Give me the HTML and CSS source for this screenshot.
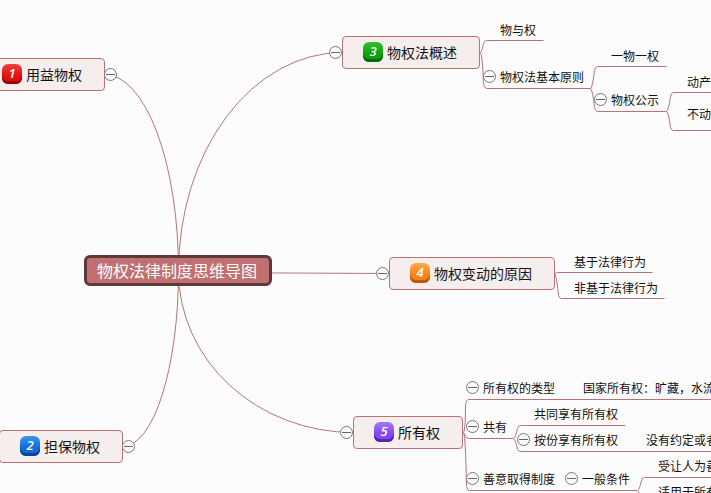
FILE: index.html
```
<!DOCTYPE html>
<html lang="zh-CN">
  <head>
    <meta charset="UTF-8" />
    <meta name="viewport" content="width=device-width, initial-scale=1.0" />
    <title>物权法律制度思维导图</title>
    <link rel="stylesheet" href="styles.css">
  </head>
  <body>
    <main class="map">
      <svg class="lines" aria-hidden="true">
        <g transform="translate(.5 .5)">
          <!-- root to main topics -->
          <path d="M178 271A74 196 0 0 0 104 74" />
          <path d="M178 271A164 219 0 0 1 342 52" />
          <path d="M178 271A56 175 0 0 1 122 446" />
          <path d="M178 271A175 161 0 0 0 353 432" />
          <path d="M178 272L389 273" />
          <!-- 3 -->
          <path d="M480 52Q482 50 483 43Q484 40 486 40H543" />
          <path d="M480 52Q482 55 483 83Q484 88 486 88H590" />
          <path d="M590 88Q592 87 594 70Q595 66 597 66H666" />
          <path d="M590 88Q592 89 594 107Q595 111 597 111H666" />
          <path d="M666 111Q668 110 670 96Q671 92 673 92H2000" />
          <path d="M666 111Q668 112 670 127Q671 130 673 130H2000" />
          <!-- 4 -->
          <path d="M554 273L557 272H652" />
          <path d="M554 273Q556 274 558 295Q559 298 561 298H664" />
          <!-- 5 -->
          <path d="M463 432Q465 430 465 404Q466 399 468 399H2000" />
          <path d="M463 432L466 437L468 438H513" />
          <path d="M463 432Q465 434 466 486Q467 490 469 490H637" />
          <path d="M513 438Q515 437 517 428Q518 425 520 425H625" />
          <path d="M513 438Q515 439 517 449Q518 451 520 451H2000" />
          <path d="M637 490Q639 489 641 480Q642 477 644 477H2000" />
          <path d="M637 490Q639 491 641 502Q642 503 644 503H2000" />
        </g>
      </svg>

      <h1 class="root">物权法律制度思维导图</h1>

      <div class="topic t1"><span class="badge red">1</span>用益物权</div>
      <div class="topic t2"><span class="badge blue">2</span>担保物权</div>
      <div class="topic t3"><span class="badge green">3</span>物权法概述</div>
      <div class="topic t4"><span class="badge orange">4</span>物权变动的原因</div>
      <div class="topic t5"><span class="badge purple">5</span>所有权</div>
      <button class="toggle b1" aria-label="收起 用益物权"></button>
      <button class="toggle b2" aria-label="收起 担保物权"></button>
      <button class="toggle b3" aria-label="收起 物权法概述"></button>
      <button class="toggle b4" aria-label="收起 物权变动的原因"></button>
      <button class="toggle b5" aria-label="收起 所有权"></button>

      <div class="sub s31">物与权</div>
      <div class="sub s32"><button class="toggle" aria-label="收起 物权法基本原则"></button>物权法基本原则</div>
      <div class="sub s321">一物一权</div>
      <div class="sub s322"><button class="toggle" aria-label="收起 物权公示"></button>物权公示</div>
      <div class="sub s3221">动产</div>
      <div class="sub s3222">不动产</div>

      <div class="sub s41">基于法律行为</div>
      <div class="sub s42">非基于法律行为</div>

      <div class="sub s51"><button class="toggle" aria-label="收起 所有权的类型"></button>所有权的类型</div>
      <div class="sub s511">国家所有权：旷藏，水流</div>
      <div class="sub s52"><button class="toggle" aria-label="收起 共有"></button>共有</div>
      <div class="sub s521">共同享有所有权</div>
      <div class="sub s522"><button class="toggle" aria-label="收起 按份享有所有权"></button>按份享有所有权</div>
      <div class="sub s5221">没有约定或者</div>
      <div class="sub s53"><button class="toggle" aria-label="收起 善意取得制度"></button>善意取得制度</div>
      <div class="sub s531"><button class="toggle" aria-label="收起 一般条件"></button>一般条件</div>
      <div class="sub s5311">受让人为善意</div>
      <div class="sub s5312">适用于所有权</div>
    </main>
  </body>
</html>
```
FILE: styles.css
```
* {
  box-sizing: border-box;
  margin: 0;
}
body {
  background-color: #fcfcfc;
  color: #111;
  font-family: "Noto Sans CJK SC", sans-serif;
}
.map {
  position: relative;
  height: 100vh;
  overflow: hidden;
}
.lines {
  position: absolute;
  left: 0;
  top: 0;
  width: 100%;
  height: 100%;
}
.lines path {
  fill: none;
  stroke: #b87474;
  stroke-width: 1;
}

.root {
  position: absolute;
  left: 84px;
  top: 255px;
  padding: 0 12px 0 10px;
  border: 3px solid #5e3939;
  border-radius: 6px;
  background-color: #c07070;
  color: #fff;
  font-size: 16px;
  font-weight: 400;
  line-height: 25px;
  white-space: nowrap;
}

.topic {
  position: absolute;
  display: flex;
  align-items: center;
  gap: 4px;
  height: 33px;
  padding: 0 22px 1px 20px;
  border: 1px solid #b87474;
  border-radius: 4px;
  background-color: #f6eded;
  font-size: 14px;
  line-height: 20px;
  white-space: nowrap;
}
.t1 { left: -19px; top: 58px; }
.t2 { left: -1px; top: 430px; }
.t3 { left: 342px; top: 36px; }
.t4 { left: 389px; top: 257px; }
.t5 { left: 353px; top: 416px; }

.badge {
  width: 20px;
  height: 20px;
  border-radius: 6px;
  color: #fff;
  font: italic 600 13px/19px "Open Sans", sans-serif;
  text-align: center;
}
.red {
  background: linear-gradient(#f4403c, #e01010 60%);
  box-shadow: inset 0 -3px #a00404;
}
.blue {
  background: linear-gradient(#3d94f0, #0f6ad8 60%);
  box-shadow: inset 0 -3px #084494;
}
.green {
  background: linear-gradient(#35c02c, #0fa010 60%);
  box-shadow: inset 0 -3px #066806;
}
.orange {
  background: linear-gradient(#ffa84c, #f28418 60%);
  box-shadow: inset 0 -3px #b85a0c;
}
.purple {
  background: linear-gradient(#a678fa, #8248ee 60%);
  box-shadow: inset 0 -3px #5424b4;
}

/* collapse button */
.toggle {
  position: absolute;
  width: 13px;
  height: 13px;
  padding: 0;
  border: 1px solid #777;
  border-radius: 50%;
  background: linear-gradient(#666, #666) center / 9px 1px no-repeat #fcfcfc;
  cursor: pointer;
}
.b1 { left: 104px; top: 68px; }
.b2 { left: 122px; top: 440px; }
.b3 { left: 329px; top: 46px; }
.b4 { left: 376px; top: 267px; }
.b5 { left: 340px; top: 426px; }

.sub {
  position: absolute;
  font-size: 12px;
  line-height: 18px;
  white-space: nowrap;
}
.sub .toggle {
  left: -17px;
  top: 2px;
}
.s31 { left: 500px; top: 21px; }
.s32 { left: 500px; top: 68px; }
.s321 { left: 611px; top: 47px; }
.s322 { left: 611px; top: 91px; }
.s3221 { left: 687px; top: 73px; }
.s3222 { left: 687px; top: 105px; }

.s41 { left: 574px; top: 253px; }
.s42 { left: 574px; top: 279px; }

.s51 { left: 483px; top: 379px; }
.s511 { left: 583px; top: 379px; }
.s52 { left: 483px; top: 418px; }
.s521 { left: 534px; top: 405px; }
.s522 { left: 534px; top: 431px; }
.s5221 { left: 646px; top: 431px; }
.s53 { left: 483px; top: 470px; }
.s531 { left: 582px; top: 470px; }
.s5311 { left: 658px; top: 457px; }
.s5312 { left: 658px; top: 483px; }
```
